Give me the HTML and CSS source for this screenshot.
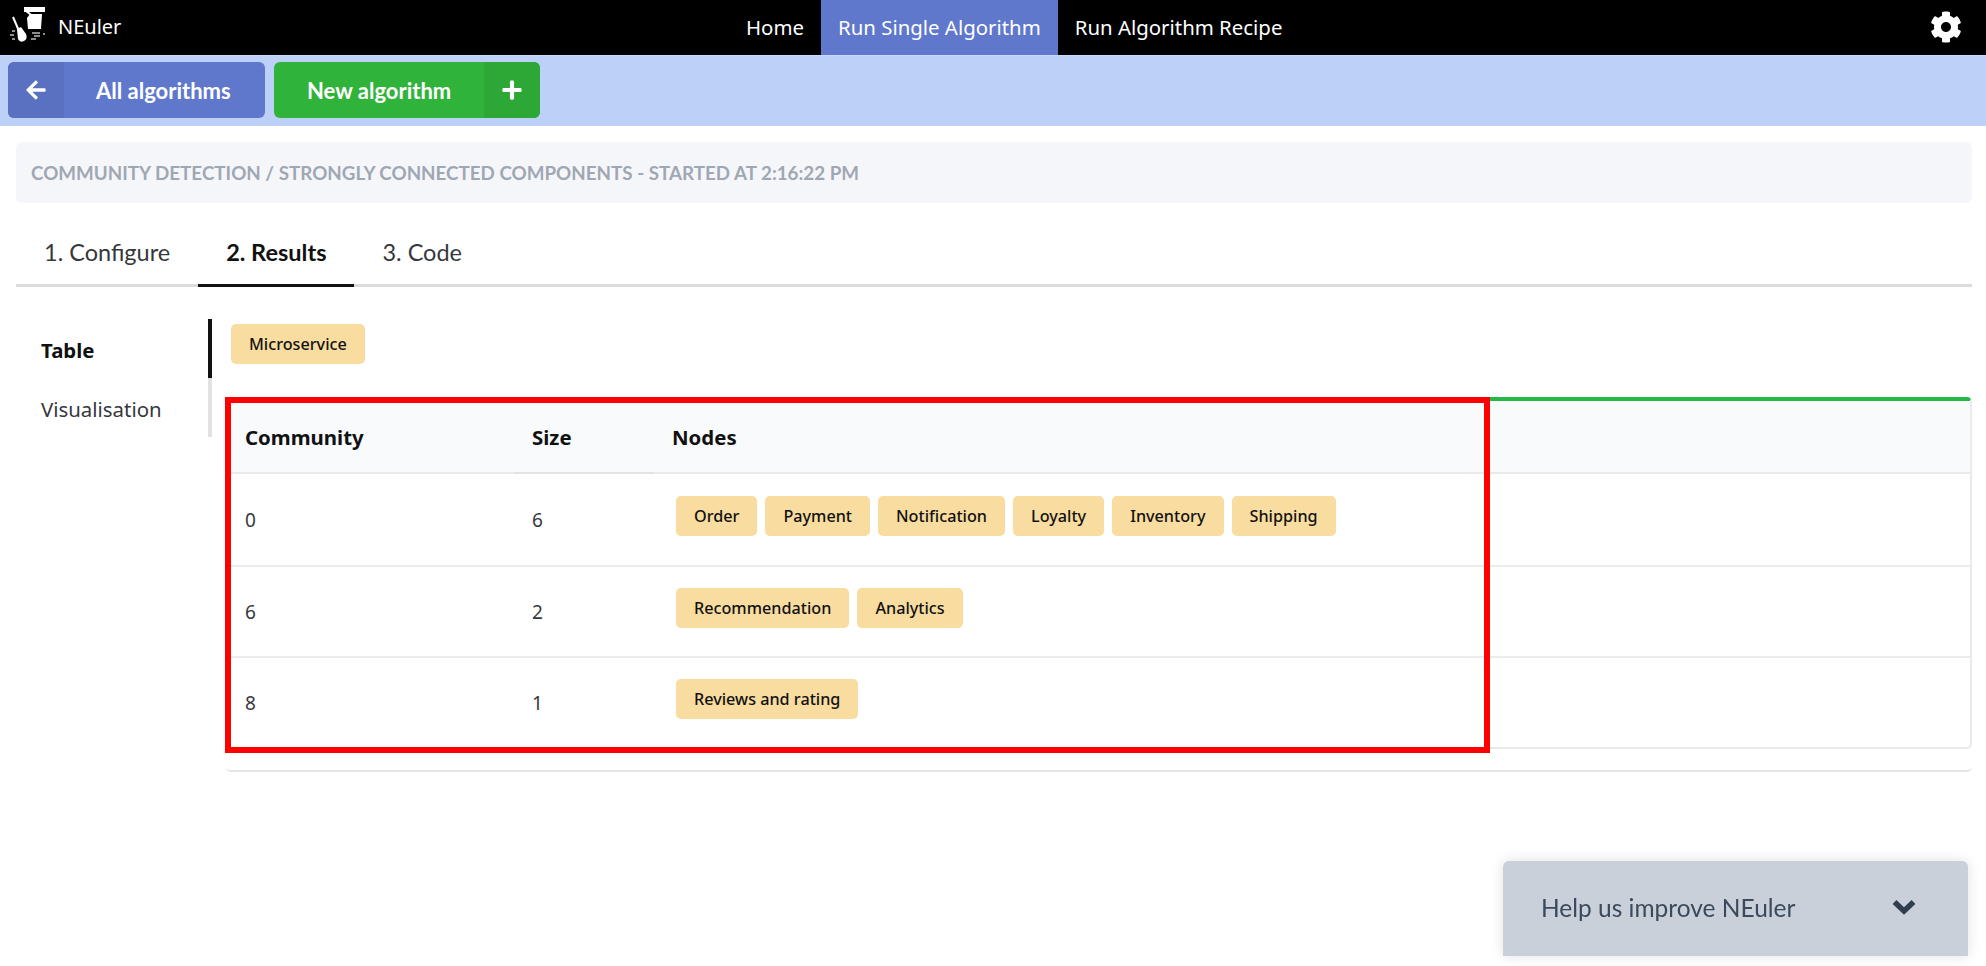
FILE: index.html
```html
<!DOCTYPE html>
<html lang="en">
<head>
<meta charset="utf-8">
<title>NEuler</title>
<link rel="stylesheet" href="styles.css">
</head>
<body>
<header class="topnav">
  <div class="brand">
    <svg class="logo" viewBox="0 0 38 36" width="38" height="36" aria-hidden="true">
      <path class="logo-fill" d="M14 0h21v5h-21z"/>
      <path class="logo-fill" d="M20 7h12l-1 15h-13l-1-11z"/>
      <path class="logo-line" d="M16 4l8 6"/>
      <path class="logo-line" d="M3 10l6 14"/>
      <path class="logo-fill" d="M7 22l4-2 5 7q2 5-2 7-4 2-6-2z"/>
      <path class="logo-line-thin" d="M2 24h3M0 28h4M2 32h3M22 26h8M24 29h6M21 32h5M33 27h2"/>
    </svg>
    <span class="brand-name">NEuler</span>
  </div>
  <nav class="menu">
    <a class="menu-item">Home</a>
    <a class="menu-item is-active">Run Single Algorithm</a>
    <a class="menu-item">Run Algorithm Recipe</a>
  </nav>
  <svg class="gear" viewBox="0 0 512 512" width="32" height="32" aria-hidden="true">
    <path d="M487.400 315.700l-42.600-24.600c4.300-23.200 4.300-47 0-70.200l42.600-24.600c4.900-2.800 7.100-8.600 5.500-14-11.100-35.600-30-67.800-54.700-94.600-3.800-4.100-10-5.100-14.800-2.300L380.800 110c-17.900-15.400-38.500-27.300-60.800-35.100V25.800c0-5.600-3.900-10.500-9.400-11.700-36.700-8.200-74.300-7.800-109.200 0-5.500 1.200-9.400 6.100-9.400 11.700V75c-22.200 7.900-42.800 19.800-60.800 35.100L88.700 85.500c-4.900-2.800-11-1.900-14.800 2.300-24.700 26.700-43.600 58.900-54.700 94.600-1.700 5.400.6 11.200 5.500 14L67.300 221c-4.300 23.200-4.300 47 0 70.200l-42.600 24.600c-4.900 2.800-7.100 8.600-5.500 14 11.100 35.600 30 67.800 54.700 94.600 3.800 4.100 10 5.100 14.800 2.300l42.600-24.600c17.900 15.400 38.500 27.300 60.800 35.100v49.200c0 5.600 3.900 10.500 9.400 11.700 36.700 8.200 74.300 7.800 109.200 0 5.500-1.200 9.400-6.100 9.400-11.700v-49.200c22.200-7.900 42.800-19.800 60.800-35.100l42.600 24.600c4.900 2.800 11 1.900 14.800-2.300 24.700-26.700 43.600-58.900 54.700-94.600 1.500-5.500-.7-11.300-5.600-14.100zM256 336c-44.100 0-80-35.900-80-80s35.900-80 80-80 80 35.900 80 80-35.900 80-80 80z"/>
  </svg>
</header>

<div class="actionbar">
  <button class="btn btn-blue">
    <span class="btn-icon btn-icon-blue">
      <svg viewBox="0 0 448 512" width="20" height="22" aria-hidden="true"><path d="M257.500 445.100l-22.200 22.200c-9.400 9.400-24.600 9.400-33.900 0L7 273c-9.400-9.400-9.400-24.600 0-33.900L201.400 44.700c9.400-9.400 24.600-9.400 33.900 0l22.200 22.200c9.500 9.500 9.300 25-.4 34.300L136.600 216H424c13.300 0 24 10.700 24 24v32c0 13.300-10.700 24-24 24H136.600l120.500 114.800c9.800 9.300 10 24.800.4 34.300z"/></svg>
    </span>
    <span class="btn-text btn-text-left">All algorithms</span>
  </button>
  <button class="btn btn-green">
    <span class="btn-text btn-text-right">New algorithm</span>
    <span class="btn-icon btn-icon-green">
      <svg viewBox="0 0 448 512" width="20" height="22" aria-hidden="true"><path d="M416 208H272V64c0-17.670-14.330-32-32-32h-32c-17.670 0-32 14.330-32 32v144H32c-17.670 0-32 14.330-32 32v32c0 17.670 14.330 32 32 32h144v144c0 17.670 14.330 32 32 32h32c17.670 0 32-14.330 32-32V304h144c17.670 0 32-14.330 32-32v-32c0-17.670-14.330-32-32-32z"/></svg>
    </span>
  </button>
</div>

<main class="page">
  <div class="crumb">Community Detection / Strongly Connected Components - Started at 2:16:22 PM</div>

  <div class="tabs">
    <a class="tab">1. Configure</a>
    <a class="tab is-active">2. Results</a>
    <a class="tab">3. Code</a>
  </div>

  <div class="results">
    <aside class="side">
      <a class="side-item is-active">Table</a>
      <a class="side-item">Visualisation</a>
    </aside>
    <section class="panel">
      <span class="tag tag-head">Microservice</span>
      <div class="segment">
        <div class="card">
          <table class="grid">
            <colgroup><col class="col-a"><col class="col-b"><col></colgroup>
            <thead>
              <tr><th>Community</th><th class="th-size">Size</th><th>Nodes</th></tr>
            </thead>
            <tbody>
              <tr>
                <td>0</td><td>6</td>
                <td><div class="tags"><span class="tag">Order</span><span class="tag">Payment</span><span class="tag">Notification</span><span class="tag">Loyalty</span><span class="tag">Inventory</span><span class="tag">Shipping</span></div></td>
              </tr>
              <tr>
                <td>6</td><td>2</td>
                <td><div class="tags"><span class="tag">Recommendation</span><span class="tag">Analytics</span></div></td>
              </tr>
              <tr>
                <td>8</td><td>1</td>
                <td><div class="tags"><span class="tag">Reviews and rating</span></div></td>
              </tr>
            </tbody>
          </table>
          <div class="highlight"></div>
        </div>
      </div>
    </section>
  </div>
</main>

<aside class="feedback">
  <span class="feedback-text">Help us improve NEuler</span>
  <svg class="chevron" viewBox="0 0 24 16" width="24" height="16" aria-hidden="true"><path d="M2.500 3l9.500 9 9.500-9" /></svg>
</aside>
</body>
</html>
```
FILE: styles.css
```css
* { box-sizing: border-box; }
html, body { margin: 0; padding: 0; background: #fff; }
body { font-family: "Noto Sans", "Open Sans", sans-serif; color: #1b1c1d; overflow-x: hidden; }

.topnav { height: 55px; background: #000; display: grid; grid-template-columns: 728px auto 1fr; align-items: stretch; color: #fff; }
.brand { display: flex; align-items: center; padding-left: 10px; gap: 10px; }
.logo { display: block; margin-top: -5px; }
.logo-fill { fill: #fff; }
.logo-line { stroke: #fff; stroke-width: 2; fill: none; }
.logo-line-thin { stroke: #bbb; stroke-width: 1.300; fill: none; }
.brand-name { font-size: 20px; line-height: 1; padding-bottom: 2px; }
.menu { display: flex; }
.menu-item { display: flex; align-items: center; padding: 0 17px 2px 17px; font-size: 20.400px; white-space: nowrap; }
.menu-item:first-child { padding-left: 18px; }
.menu-item.is-active { background: #6078cc; }
.gear { justify-self: end; align-self: center; margin: -2px 24px 0 0; fill: #fff; }

.actionbar { height: 71px; background: #bdd0f8; border-top: 1px solid #c9d8f8; display: flex; gap: 9px; padding: 6px 0 0 8px; align-items: flex-start; }
.btn { height: 56px; border: 0; padding: 0; border-radius: 6px; display: flex; align-items: stretch; color: #fff; font-family: "Lato", sans-serif; font-weight: 700; font-size: 22px; overflow: hidden; }
.btn-blue { width: 257px; background: #6078cc; }
.btn-green { width: 266px; background: #30b33b; }
.btn-icon { display: flex; align-items: center; justify-content: center; flex: none; }
.btn-icon svg { fill: #fff; display: block; }
.btn-icon-blue { width: 56px; background: #5a70c1; }
.btn-icon-green { width: 56px; background: #2da837; }
.btn-text { flex: 1; display: flex; align-items: center; }
.btn-text-left { padding-left: 32px; }
.btn-text-right { padding-left: 33px; }

.page { padding: 16px 14px 0 16px; }
.crumb { height: 61px; background: #f5f6fa; border-radius: 6px; display: flex; align-items: center; padding-left: 15px; color: #9fa7b3; font-family: "Lato", sans-serif; font-weight: 700; font-size: 18.800px; text-transform: uppercase; }

.tabs { margin-top: 20px; height: 64px; display: flex; padding-left: 0; border-bottom: 3px solid #dcdcdc; }
.tab { height: 64px; padding: 0 28px 3px; display: flex; align-items: center; font-family: "Lato", sans-serif; font-size: 23.500px; color: #35383d; border-bottom: 3px solid transparent; }
.tab.is-active { font-weight: 700; color: #111; border-bottom-color: #111; }

.results { margin-top: 32px; display: flex; align-items: flex-start; }
.side { width: 196px; height: 118px; border-right: 4px solid #e2e2e2; margin-right: 14px; flex: none; display: flex; flex-direction: column; }
.side-item { height: 59px; margin-right: -4px; padding: 3px 0 0 25px; display: flex; align-items: center; font-size: 20.400px; color: #35383d; border-right: 4px solid transparent; }
.side-item.is-active { font-weight: 700; color: #111; border-right-color: #111; }

.panel { flex: 1; min-width: 0; padding-top: 5px; }
.tag { display: inline-flex; align-items: center; height: 40px; padding: 0 18px; background: #f9dc9f; border-radius: 5px; color: #111; font-size: 16.200px; font-weight: 500; white-space: nowrap; }
.tag-head { margin-left: 5px; }
.segment { margin-top: 33px; padding-bottom: 21px; border-bottom: 2px solid #e6e6e6; border-radius: 0 0 5px 5px; }
.card { position: relative; border: 2px solid #e9eaeb; border-top: 4px solid #21ba45; border-radius: 5px; }
.grid { width: 100%; border-collapse: separate; border-spacing: 0; table-layout: fixed; }
.col-a { width: 286px; }
.col-b { width: 140px; }
.grid th { height: 73px; background: #f9fafb; border-bottom: 2px solid #e9eaeb; padding: 0 18px; text-align: left; font-size: 20.400px; font-weight: 700; color: #111; }
.grid th:first-child, .grid td:first-child { padding-left: 17px; }
.grid th.th-size { border-bottom-color: #e2e3e5; }
.grid td { height: 91px; padding: 0 18px; border-top: 2px solid #ebecee; font-size: 19px; color: #35383d; vertical-align: middle; }
.grid tbody tr:first-child td { border-top: 0; }
.tags { display: flex; gap: 8px; margin: -8px 0 0 4px; }
.highlight { position: absolute; left: -3px; top: -4px; width: 1265px; height: 356px; border: 6px solid #f00; pointer-events: none; }

.feedback { position: fixed; right: 18px; bottom: 10px; width: 465px; height: 95px; background: #c9d0da; border-radius: 6px 6px 0 0; box-shadow: 0 0 14px rgba(0,0,0,.12); display: flex; align-items: center; justify-content: space-between; padding: 0 52px 0 38px; }
.feedback-text { font-family: "Lato", sans-serif; font-size: 24.500px; color: #3a4a5c; padding-bottom: 2px; }
.chevron { fill: none; stroke: #2f3f50; stroke-width: 5.500; display: block; margin-bottom: 3px; }
```
